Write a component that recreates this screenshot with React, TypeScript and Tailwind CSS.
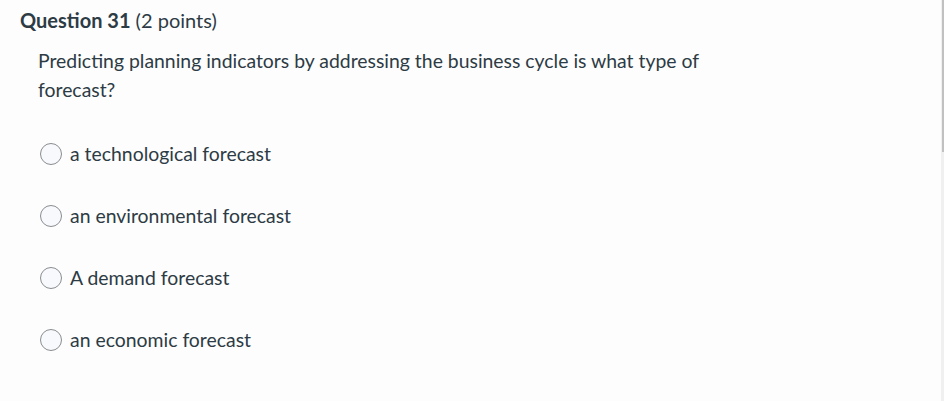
const options = [
  "a technological forecast",
  "an environmental forecast",
  "A demand forecast",
  "an economic forecast",
];

export default function App() {
  return (
    <div className="flex h-[401px] w-[944px] bg-[#fdfdfd] font-['Lato',sans-serif] text-[#2d3b45]">
      <div className="flex-1 pl-5 pt-[8px]">
        <h2 className="text-[20px] leading-[24px]">
          <span className="font-bold">Question 31</span>{" "}
          <span className="font-normal">(2 points)</span>
        </h2>

        <div className="pl-[18px] pt-[14px]">
          <p className="max-w-[690px] text-[19.4px] leading-[29px]">
            Predicting planning indicators by addressing the business cycle
            is what type of forecast?
          </p>

          <div className="mt-[38px] flex flex-col gap-[39px]">
            {options.map((label) => (
              <label key={label} className="flex h-[23px] items-center">
                <span className="ml-[2px] h-[22px] w-[22px] shrink-0 rounded-full border border-[#8a8d90] bg-[#f7f9fd]" />
                <span className="ml-[8px] text-[19.4px] leading-[23px]">
                  {label}
                </span>
              </label>
            ))}
          </div>
        </div>
      </div>

      <div className="w-[3px] bg-[#f0f0f0]">
        <div className="ml-[1px] h-[152px] w-[2px] bg-[#c1c1c1]" />
      </div>
    </div>
  );
}
